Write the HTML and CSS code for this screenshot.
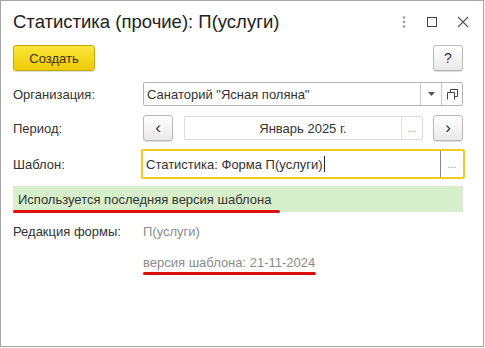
FILE: index.html
```html
<!DOCTYPE html>
<html lang="ru">
<head>
    <meta charset="UTF-8">
    <title>Статистика (прочие): П(услуги)</title>
    <link rel="stylesheet" href="styles.css">
</head>
<body>

    <div class="window">
        <div class="title-bar">
            <h1>Статистика (прочие): П(услуги)</h1>
            <div class="title-icons">
                <svg width="6" height="12" viewBox="0 0 6 12"><circle cx="3" cy="1.5" r="1.3" fill="#999"/><circle cx="3" cy="6" r="1.3" fill="#999"/><circle cx="3" cy="10.5" r="1.3" fill="#999"/></svg>
                <svg width="10" height="10" viewBox="0 0 10 10"><rect x="0.5" y="0.5" width="9" height="9" fill="none" stroke="#444"/></svg>
                <svg width="12" height="12" viewBox="0 0 12 12"><path d="M1 1 L11 11 M11 1 L1 11" stroke="#555" stroke-width="1.1"/></svg>
            </div>
        </div>

        <div class="toolbar">
            <button class="btn btn-primary">Создать</button>
            <button class="btn btn-help">?</button>
        </div>

        <div class="form">
            <div class="row row-org">
                <span class="label">Организация:</span>
                <div class="field">
                    <span class="field-text">Санаторий "Ясная поляна"</span>
                    <span class="field-btn"><svg width="7" height="4" viewBox="0 0 7 4"><path d="M0 0 H7 L3.5 4 Z" fill="#555"/></svg></span>
                    <span class="field-btn"><svg width="11" height="11" viewBox="0 0 11 11"><path d="M3.5 0.5 H10.5 V7.5 H7.5 M0.5 3.5 H7.5 V10.5" fill="none" stroke="#444"/><path d="M0.5 3.5 V10.5" fill="none" stroke="#444"/><path d="M3.5 0.5 V3.5" fill="none" stroke="#444"/></svg></span>
                </div>
            </div>

            <div class="row row-period">
                <span class="label">Период:</span>
                <button class="btn btn-nav">&lsaquo;</button>
                <div class="field field-date">
                    <span class="field-text">Январь 2025 г.</span>
                    <span class="field-btn dots">...</span>
                </div>
                <button class="btn btn-nav">&rsaquo;</button>
            </div>

            <div class="row row-template">
                <span class="label">Шаблон:</span>
                <div class="field field-active">
                    <span class="field-text">Статистика: Форма П(услуги)<span class="caret"></span></span>
                    <span class="field-btn dots">...</span>
                </div>
            </div>

            <div class="notice">
                <span class="marked">Используется последняя версия шаблона</span>
            </div>

            <div class="row row-info">
                <span class="label">Редакция формы:</span>
                <span class="muted">П(услуги)</span>
            </div>
            <div class="row row-version">
                <span class="label"></span>
                <span class="muted marked marked-version">версия шаблона: 21-11-2024</span>
            </div>
        </div>
    </div>

</body>
</html>
```

FILE: styles.css
```css
/* General */
body {
    margin: 0;
    background: #fbf7ef;
    font-family: "Liberation Sans", Arial, sans-serif;
    font-size: 13px;
    color: #333;
}

/* Window frame */
.window {
    width: 484px;
    height: 347px;
    box-sizing: border-box;
    background: #fff;
    border: 1px solid #a6a6a6;
}

.title-bar {
    display: flex;
    align-items: center;
    height: 42px;
    padding: 0 14px 0 12px;
}

.title-bar h1 {
    flex: 1;
    margin: 0;
    font-size: 18.5px;
    font-weight: normal;
    color: #222;
}

.title-icons {
    display: flex;
    align-items: center;
    gap: 20px;
}

/* Toolbar */
.toolbar {
    display: flex;
    justify-content: space-between;
    padding: 2px 20px 0 12px;
}

.btn {
    font-family: inherit;
    font-size: 13px;
    color: #333;
    height: 26px;
    border-radius: 3px;
    border: 1px solid #b9b9b9;
    background: linear-gradient(#ffffff, #e9e9e9);
    box-shadow: 0 1px 1px rgba(0, 0, 0, 0.15);
    padding: 0;
    cursor: pointer;
}

.btn-primary {
    width: 82px;
    background: linear-gradient(#fbe43b, #efcb05);
    border-color: #c9a900;
    color: #3d3200;
}

.btn-help {
    width: 30px;
    font-size: 14px;
}

.btn-nav {
    width: 30px;
    font-size: 17px;
    line-height: 20px;
}

/* Form */
.form {
    padding: 0 20px 0 12px;
}

.row {
    display: flex;
    align-items: center;
}

.label {
    width: 130px;
    flex: none;
}

.row-org {
    margin-top: 11px;
    height: 24px;
}

.row-period {
    margin-top: 9px;
    height: 26px;
}

.row-template {
    margin-top: 8px;
    height: 30px;
}

.field {
    flex: 1;
    display: flex;
    align-items: stretch;
    height: 24px;
    box-sizing: border-box;
    border: 1px solid #b5b5b5;
    border-radius: 2px;
    background: #fff;
}

.field-text {
    flex: 1;
    display: flex;
    align-items: center;
    padding-left: 3px;
    white-space: nowrap;
}

.field-btn {
    width: 20px;
    display: flex;
    align-items: center;
    justify-content: center;
    border-left: 1px solid #c8c8c8;
}

.dots {
    color: #999;
    font-size: 11px;
}

.field-date {
    margin: 0 10px 0 11px;
    border-color: #dcdcdc;
}

.field-date .field-text {
    justify-content: center;
    padding-left: 20px;
}

.field-date .field-btn {
    border-left-color: #e2e2e2;
}

.field-active {
    height: 30px;
    margin-left: -2px;
    margin-right: -2px;
    border: 2px solid #f2c925;
}

.field-active .field-btn {
    width: 22px;
    border-left-color: #888;
}

.caret {
    display: inline-block;
    width: 1px;
    height: 16px;
    margin-left: 1px;
    background: #222;
}

/* Notice */
.notice {
    margin-top: 7px;
    height: 26px;
    display: flex;
    align-items: center;
    padding-left: 5px;
    background: #d8efcb;
    color: #333;
}

.marked {
    position: relative;
}

.marked::after {
    content: "";
    position: absolute;
    left: -5px;
    right: -9px;
    bottom: -6px;
    height: 3px;
    border-radius: 2px;
    background: #dd1010;
}

/* Info rows */
.row-info {
    margin-top: 9px;
    height: 20px;
}

.row-version {
    margin-top: 11px;
    height: 20px;
}

.muted {
    color: #8c8c8c;
}

.marked-version::after {
    left: 0;
    right: -1px;
    bottom: -5px;
}
```
